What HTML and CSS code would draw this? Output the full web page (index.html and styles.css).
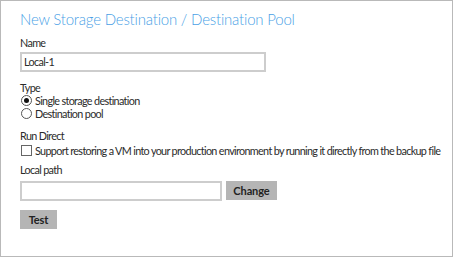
FILE: index.html
```html
<!DOCTYPE html>
<html>
<head>
<meta charset="utf-8">
<link rel="stylesheet" href="styles.css">
</head>
<body>
<div class="frame">
  <h1 class="title">New Storage Destination / Destination Pool</h1>
  <div class="field f-name">
    <div class="label">Name</div>
    <div class="input name-input">Local-1</div>
  </div>
  <div class="field f-type">
    <div class="label">Type</div>
    <div class="option"><span class="radio checked"></span><span>Single storage destination</span></div>
    <div class="option"><span class="radio"></span><span>Destination pool</span></div>
  </div>
  <div class="field f-run">
    <div class="label">Run Direct</div>
    <div class="option check-row"><span class="checkbox"></span><span>Support restoring a VM into your production environment by running it directly from the backup file</span></div>
  </div>
  <div class="field f-path">
    <div class="label">Local path</div>
    <div class="path-row">
      <div class="input path-input"></div>
      <div class="btn change">Change</div>
    </div>
  </div>
  <div class="btn test">Test</div>
</div>
</body>
</html>
```
FILE: styles.css
```css
html, body { margin: 0; padding: 0; background: #fff; }
body {
  width: 453px; height: 257px; overflow: hidden;
  font-family: "Lato", "Noto Sans", sans-serif;
  font-size: 10.8px;
  letter-spacing: -0.66px;
  color: #2b2b2b;
}
.frame {
  box-sizing: border-box;
  width: 453px; height: 257px;
  border: 1px solid #b9b9b9;
  padding: 7px 0 0 19px;
}
.title {
  margin: 0;
  font-weight: 300;
  font-size: 15px;
  letter-spacing: -0.2px;
  line-height: 22px;
  height: 22px;
  color: #4a9fe6;
  white-space: nowrap;
}
.label { line-height: 13px; height: 13px; white-space: nowrap; }
.f-name { margin-top: 6px; }
.f-name .label { margin-bottom: 3px; }
.f-type { margin-top: 9px; }
.f-run { margin-top: 9px; }
.f-path { margin-top: 6px; }
.f-path .label { margin-bottom: 5px; }
.input {
  box-sizing: border-box;
  border: 2px solid #cdcdcd;
  height: 20px;
  line-height: 16px;
  padding: 0 2px;
  background: #fff;
  white-space: nowrap;
}
.name-input { width: 246px; }
.option { display: flex; align-items: center; height: 13px; gap: 3px; white-space: nowrap; }
.radio {
  box-sizing: border-box;
  flex: none;
  width: 11px; height: 11px; border-radius: 50%;
  border: 1px solid #555;
  margin-left: 1px;
  display: flex; align-items: center; justify-content: center;
}
.radio.checked::after { content: ""; width: 5px; height: 5px; border-radius: 50%; background: #111; }
.check-row { margin-top: 2px; gap: 3px; }
.checkbox { box-sizing: border-box; flex: none; width: 11px; height: 11px; border: 1px solid #666; margin-left: 1px; }
.path-row { display: flex; gap: 4px; align-items: flex-start; }
.path-input { width: 202px; }
.btn {
  box-sizing: border-box;
  height: 19px; line-height: 19px;
  background: #b5b5b5;
  color: #222;
  text-align: center;
  font-size: 11px;
  font-weight: 700;
  letter-spacing: -0.1px;
}
.change { width: 51px; }
.test { width: 37px; margin-top: 9px; }
```
